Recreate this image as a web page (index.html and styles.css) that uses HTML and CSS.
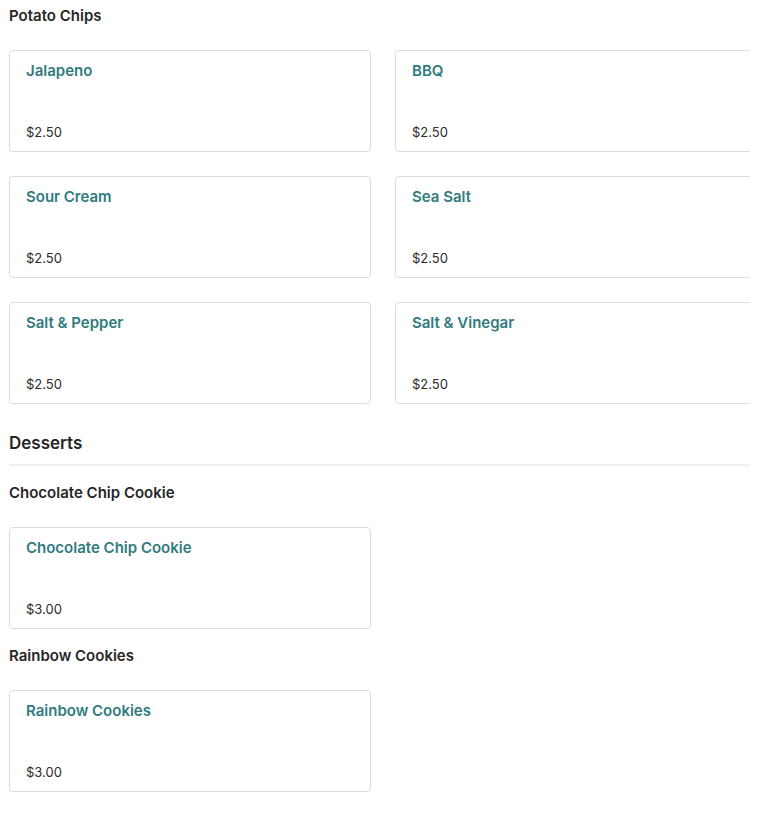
FILE: index.html
```html
<!DOCTYPE html>
<html>
<head>
<meta charset="utf-8">
<link rel="stylesheet" href="styles.css">
</head>
<body>
<div class="menu">
  <section class="group">
    <h3 class="sub">Potato Chips</h3>
    <div class="grid">
      <div class="card"><div class="title">Jalapeno</div><div class="price">$2.50</div></div>
      <div class="card"><div class="title">BBQ</div><div class="price">$2.50</div></div>
      <div class="card"><div class="title">Sour Cream</div><div class="price">$2.50</div></div>
      <div class="card"><div class="title">Sea Salt</div><div class="price">$2.50</div></div>
      <div class="card"><div class="title">Salt &amp; Pepper</div><div class="price">$2.50</div></div>
      <div class="card"><div class="title">Salt &amp; Vinegar</div><div class="price">$2.50</div></div>
    </div>
  </section>
  <h2 class="cat">Desserts</h2>
  <section class="group after-cat">
    <h3 class="sub">Chocolate Chip Cookie</h3>
    <div class="grid">
      <div class="card"><div class="title">Chocolate Chip Cookie</div><div class="price">$3.00</div></div>
    </div>
  </section>
  <section class="group next">
    <h3 class="sub">Rainbow Cookies</h3>
    <div class="grid">
      <div class="card"><div class="title">Rainbow Cookies</div><div class="price">$3.00</div></div>
    </div>
  </section>
</div>
</body>
</html>
```
FILE: styles.css
```css
html, body {
  margin: 0;
  padding: 0;
  background: #fff;
}
body {
  font-family: "Inter", "Liberation Sans", sans-serif;
  color: #2b2b2b;
}
.menu {
  width: 741px;
  margin-left: 9px;
  padding-top: 6px;
  overflow: hidden;
}
.sub {
  margin: 0;
  font-size: 15px;
  line-height: 20px;
  font-weight: 600;
  color: #262626;
}
.grid {
  display: grid;
  grid-template-columns: repeat(2, 362px);
  gap: 24px;
  margin-top: 24px;
}
.card {
  box-sizing: border-box;
  height: 102px;
  border: 1px solid #dcdcdc;
  border-radius: 4px;
  padding: 10px 16px 9px;
  display: flex;
  flex-direction: column;
  justify-content: space-between;
}
.title {
  font-size: 15px;
  line-height: 20px;
  font-weight: 600;
  color: #2f7b80;
}
.price {
  font-size: 13px;
  line-height: 20px;
  color: #2b2b2b;
}
.cat {
  margin: 27px 0 0;
  padding-bottom: 9px;
  font-size: 17px;
  line-height: 24px;
  font-weight: 600;
  color: #262626;
  border-bottom: 2px solid #f0f0f0;
}
.after-cat {
  margin-top: 17px;
}
.next {
  margin-top: 17px;
}
```
